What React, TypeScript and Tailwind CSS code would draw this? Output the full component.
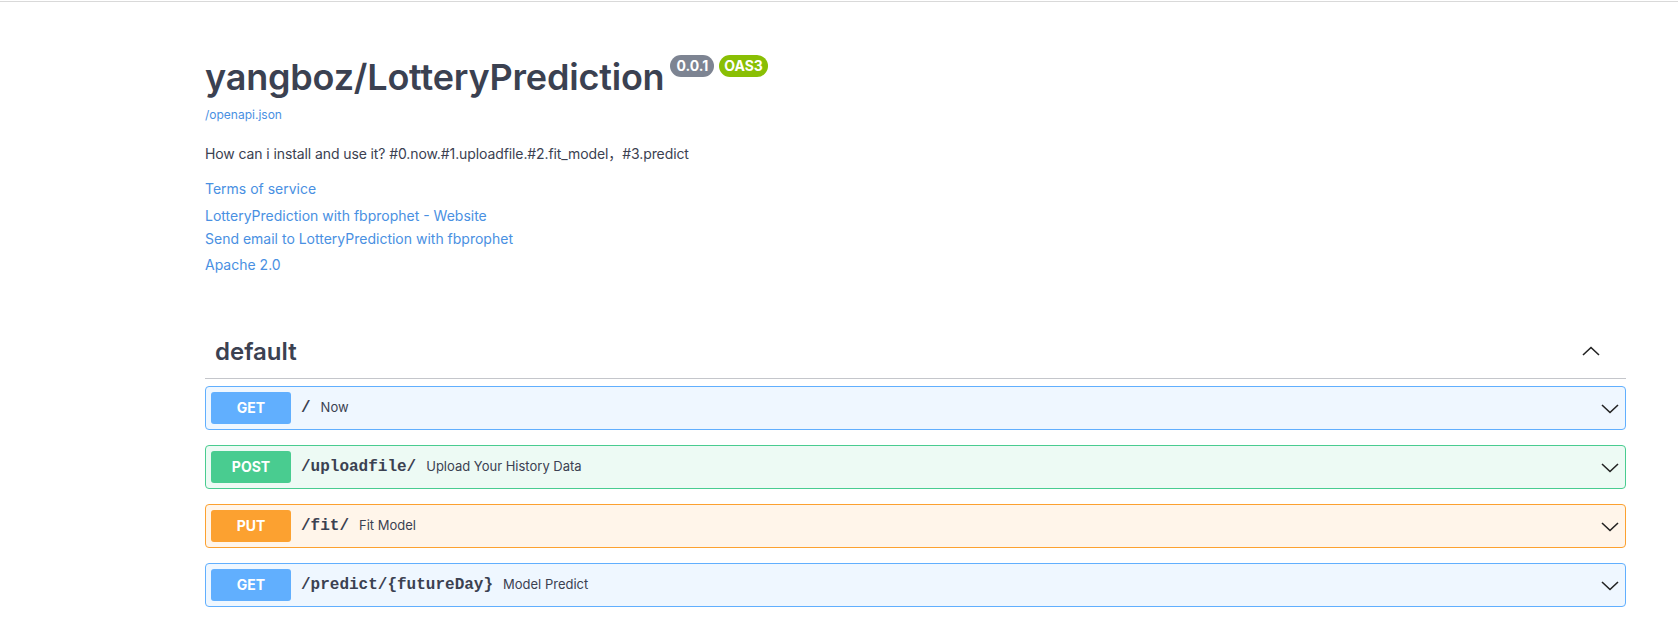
import React from "react";

const font = { fontFamily: "Inter, 'Noto Sans CJK SC', sans-serif" };

type Op = {
  method: string;
  path: string;
  summary: string;
  badge: string;
  box: string;
};

const ops: Op[] = [
  { method: "GET", path: "/", summary: "Now", badge: "bg-[#61affe]", box: "bg-[#eff7ff] border-[#61affe]" },
  { method: "POST", path: "/uploadfile/", summary: "Upload Your History Data", badge: "bg-[#49cc90]", box: "bg-[#edfaf4] border-[#49cc90]" },
  { method: "PUT", path: "/fit/", summary: "Fit Model", badge: "bg-[#fca130]", box: "bg-[#fff5ea] border-[#fca130]" },
  { method: "GET", path: "/predict/{futureDay}", summary: "Model Predict", badge: "bg-[#61affe]", box: "bg-[#eff7ff] border-[#61affe]" },
];

function Chevron({ up = false }: { up?: boolean }) {
  return (
    <svg width="20" height="20" viewBox="0 0 20 20" className={up ? "rotate-180" : ""}>
      <polyline points="2,7 10,14.5 18,7" fill="none" stroke="#222" strokeWidth="1.6" />
    </svg>
  );
}

export default function App() {
  return (
    <div className="min-h-[639px] bg-white text-[#3b4151]" style={font}>
      <div className="mt-px h-px bg-[#d9d9d9]" />
      <div className="pl-[205px]">
        <div className="w-[1421px]">
          {/* info */}
          <div className="mt-[53px] flex items-start">
            <h2 className="text-[36px] leading-[44px] font-semibold tracking-[-0.2px]">yangboz/LotteryPrediction</h2>
            <span className="ml-[6px] rounded-full bg-[#7d8492] px-[6px] text-[14px] leading-[22px] font-bold text-white">
              0.0.1
            </span>
            <span className="ml-[5px] rounded-full bg-[#89bf04] px-[5px] text-[14px] leading-[22px] font-bold text-white">
              OAS3
            </span>
          </div>
          <div className="mt-[8px] text-[12px] leading-[16px] text-[#4990e2]">/openapi.json</div>
          <p className="mt-[21px] text-[14px] leading-[20px] tracking-[-0.1px]">
            How can i install and use it? #0.now.#1.uploadfile.#2.fit_model，#3.predict
          </p>
          <div className="mt-[15px] text-[14px] leading-[20px] text-[#4990e2]">Terms of service</div>
          <div className="mt-[7px] text-[14px] leading-[20px] text-[#4990e2]">
            LotteryPrediction with fbprophet - Website
          </div>
          <div className="mt-[3px] text-[14px] leading-[20px] text-[#4990e2]">
            Send email to LotteryPrediction with fbprophet
          </div>
          <div className="mt-[6px] text-[14px] leading-[20px] text-[#4990e2]">Apache 2.0</div>

          {/* tag */}
          <div className="mt-[51px] flex items-center border-b border-[#c4c6cb] pt-[10px] pb-[10px] pl-[10px] pr-[25px]">
            <h3 className="text-[24px] leading-[32px] font-semibold">default</h3>
            <div className="ml-auto">
              <Chevron up />
            </div>
          </div>

          <div className="mt-[7px] flex flex-col gap-[15px]">
            {ops.map((op) => (
              <div key={op.path} className={`flex items-center rounded-[4px] border p-[5px] ${op.box}`}>
                <span
                  className={`w-[80px] rounded-[3px] text-center text-[14px] leading-[32px] font-bold text-white ${op.badge}`}
                >
                  {op.method}
                </span>
                <span
                  className="px-[10px] text-[16px] font-bold"
                  style={{ fontFamily: "'Liberation Mono', monospace" }}
                >
                  {op.path}
                </span>
                <span className="text-[13px]">{op.summary}</span>
                <div className="ml-auto">
                  <Chevron />
                </div>
              </div>
            ))}
          </div>
        </div>
      </div>
    </div>
  );
}
